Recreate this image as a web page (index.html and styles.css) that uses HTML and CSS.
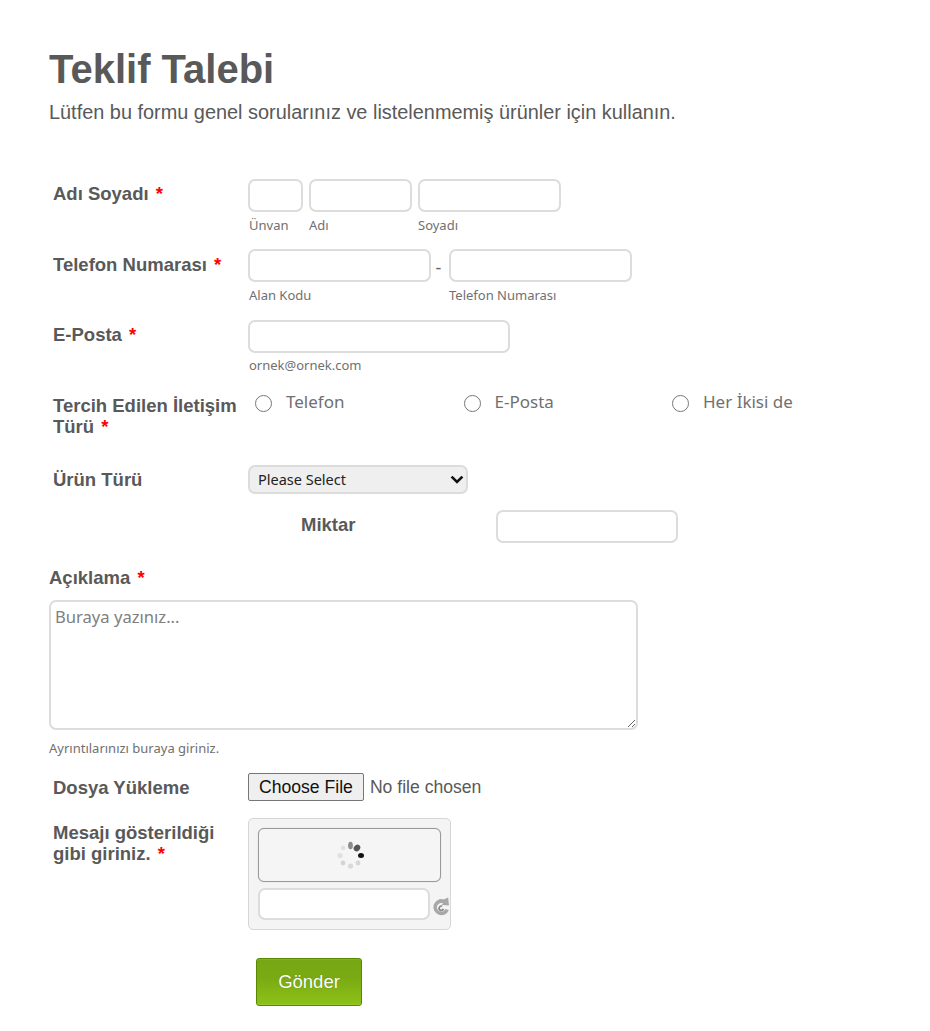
FILE: index.html
```html
<!DOCTYPE html>
<html lang="tr">
<head>
<meta charset="utf-8">
<title>Teklif Talebi</title>
<link rel="stylesheet" href="styles.css">
</head>
<body>
<form class="form">
  <header class="head">
    <h1 class="title">Teklif Talebi</h1>
    <p class="subtitle">Lütfen bu formu genel sorularınız ve listelenmemiş ürünler için kullanın.</p>
  </header>

  <div class="row row-name">
    <label class="label">Adı Soyadı <span class="req">*</span></label>
    <div class="fields">
      <div class="field"><input class="text w55" type="text"><span class="sub">Ünvan</span></div>
      <div class="field"><input class="text w103" type="text"><span class="sub">Adı</span></div>
      <div class="field"><input class="text w143" type="text"><span class="sub">Soyadı</span></div>
    </div>
  </div>

  <div class="row row-phone">
    <label class="label">Telefon Numarası <span class="req">*</span></label>
    <div class="fields fields-phone">
      <div class="field"><input class="text w183" type="text"><span class="sub">Alan Kodu</span></div>
      <span class="dash">-</span>
      <div class="field"><input class="text w183" type="text"><span class="sub">Telefon Numarası</span></div>
    </div>
  </div>

  <div class="row row-email">
    <label class="label">E-Posta <span class="req">*</span></label>
    <div class="field"><input class="text w262" type="text"><span class="sub">ornek@ornek.com</span></div>
  </div>

  <div class="row row-contact">
    <label class="label">Tercih Edilen İletişim Türü <span class="req">*</span></label>
    <div class="radios">
      <label class="radio"><input type="radio" name="c"><span class="radio-text">Telefon</span></label>
      <label class="radio"><input type="radio" name="c"><span class="radio-text">E-Posta</span></label>
      <label class="radio"><input type="radio" name="c"><span class="radio-text">Her İkisi de</span></label>
    </div>
  </div>

  <div class="row row-product">
    <label class="label">Ürün Türü</label>
    <div class="select-wrap">
      <select class="select"><option>Please Select</option></select>
      <svg class="chevron" width="14" height="9" viewBox="0 0 14 9" aria-hidden="true">
        <path d="M1.6 1.6 7 7 12.4 1.6" fill="none" stroke="#111" stroke-width="2.6"/>
      </svg>
    </div>
  </div>

  <div class="row-qty">
    <label class="label-qty">Miktar</label>
    <input class="text w182" type="text">
  </div>

  <div class="block-desc">
    <label class="label-desc">Açıklama <span class="req">*</span></label>
    <textarea class="area" placeholder="Buraya yazınız..."></textarea>
    <span class="sub sub-desc">Ayrıntılarınızı buraya giriniz.</span>
  </div>

  <div class="row row-file">
    <label class="label">Dosya Yükleme</label>
    <input class="file" type="file">
  </div>

  <div class="row row-captcha">
    <label class="label">Mesajı gösterildiği gibi giriniz. <span class="req">*</span></label>
    <div class="captcha">
      <div class="captcha-img">
        <svg class="spinner" width="28" height="30" viewBox="0 0 28 30" aria-hidden="true">
          <ellipse cx="13.5" cy="5.5" rx="2.4" ry="3.8" fill="#8c8c8c"/>
          <ellipse cx="20" cy="8" rx="3" ry="3.6" fill="#555" transform="rotate(40 20 8)"/>
          <ellipse cx="24" cy="15.5" rx="3" ry="2.5" fill="#111"/>
          <circle cx="21" cy="23" r="2.4" fill="#d6d6d6"/>
          <circle cx="13.5" cy="26" r="2.6" fill="#d9d9d9"/>
          <circle cx="6" cy="23" r="2.4" fill="#d4d4d4"/>
          <circle cx="3" cy="15.5" r="2.6" fill="#e0e0e0"/>
          <circle cx="6" cy="8" r="2.4" fill="#e2e2e2"/>
        </svg>
      </div>
      <div class="captcha-entry">
        <input class="text captcha-input" type="text">
        <svg class="refresh" width="17" height="20" viewBox="0 0 17 20" aria-hidden="true">
          <path d="M10.5 3.4A8 8 0 1 0 15.9 14l-3.6-.9a4.4 4.4 0 1 1-2.2-5.8L8.6 9l7.4.6L15.2 1.4z" fill="#a8a8a8"/>
          <path d="M9.6 9.6a3 3 0 1 0 1.6 3.4l-1.7-.4a1.3 1.3 0 1 1-.8-1.6z" fill="#8a8a8a"/>
        </svg>
      </div>
    </div>
  </div>

  <div class="actions"><button class="submit" type="button">Gönder</button></div>
</form>
</body>
</html>
```
FILE: styles.css
```css
* { box-sizing: border-box; }
html, body { margin: 0; background: #fff; }
body { font-family: "Liberation Sans", Arial, sans-serif; color: #555; }
.form { padding: 44px 0 0 49px; width: 930px; height: 1031px; overflow: hidden; }
.title { margin: 0; font-size: 40px; line-height: 50px; font-weight: 700; color: #595959; }
.subtitle { margin: 4px 0 0; font-size: 19.9px; line-height: 28px; color: #595959; }

.row { display: flex; align-items: flex-start; padding-left: 4px; }
.label { width: 195px; flex: none; font-size: 18.5px; line-height: 21px; font-weight: 700; color: #595959; }
.req { margin-left: 2px; color: #f00; }
.fields { display: flex; gap: 6px; }
.field { display: flex; flex-direction: column; }
.sub { font-family: "Noto Sans", sans-serif; font-size: 13px; line-height: 18px; color: #707070; margin-top: 4px; }
.fields .field:first-child .sub, .row-email .sub { padding-left: 1px; }
.row-email .sub { margin-top: 3px; }

.text { display: block; height: 33px; padding: 0 6px; background: #fff; border: 2px solid #dcdcdc; border-radius: 7px; outline: none; }
.w55 { width: 55px; }
.w103 { width: 103px; }
.w143 { width: 143px; }
.w183 { width: 183px; }
.w182 { width: 182px; }
.w262 { width: 262px; }

.row-name { margin-top: 53px; }
.row-name .label { padding-top: 4px; }
.row-phone { margin-top: 15px; }
.row-phone .label { padding-top: 5px; }
.fields-phone { gap: 0; }
.dash { width: 18px; padding-right: 3px; text-align: center; font-family: "Noto Sans", sans-serif; font-size: 18px; line-height: 36px; color: #666; }
.row-email { margin-top: 16px; }
.row-email .label { padding-top: 4px; }

.row-contact { margin-top: 15px; }
.row-contact .label { padding-top: 6px; padding-right: 8px; }
.radios { display: flex; }
.radio { display: flex; width: 208.5px; align-items: flex-start; font-family: "Noto Sans", sans-serif; font-size: 17px; line-height: 24px; color: #707070; }
.radio input { margin: 6px 14px 0 7px; width: 17px; height: 17px; flex: none; accent-color: #666; }
.radio-text { padding-top: 1px; }

.row-product { margin-top: 28px; }
.row-product .label { padding-top: 4px; }
.select-wrap { position: relative; width: 220px; height: 29px; }
.select { display: block; width: 100%; height: 100%; padding: 0 0 2px 8px; appearance: none; background: #efefef; border: 2px solid #dcdcdc; border-radius: 7px; font-family: "Noto Sans", sans-serif; font-size: 14.5px; color: #222; outline: none; }
.chevron { position: absolute; top: 10px; right: 4px; pointer-events: none; }

.row-qty { display: flex; align-items: center; margin-top: 16px; padding-left: 252px; }
.label-qty { width: 195px; padding-bottom: 4px; font-size: 18.5px; font-weight: 700; color: #595959; }

.block-desc { display: flex; flex-direction: column; align-items: flex-start; margin-top: 24px; }
.label-desc { font-size: 18.5px; line-height: 21px; font-weight: 700; color: #595959; }
.area { display: block; width: 589px; height: 130px; margin-top: 12px; padding: 3px 4px; border: 2px solid #dcdcdc; border-radius: 7px; font-family: "Noto Sans", sans-serif; font-size: 16.6px; line-height: 24px; color: #555; outline: none; resize: both; }
.area::placeholder { color: #808080; opacity: 1; }
.sub-desc { font-size: 13px; margin-top: 9px; }

.row-file { margin-top: 16px; align-items: center; }
.file { font-family: "Liberation Sans", Arial, sans-serif; font-size: 17.6px; color: #595959; width: 300px; }
.file::file-selector-button { font: inherit; color: #111; height: 28px; padding: 0 10px; margin-right: 6px; background: #efefef; border: 1px solid #767676; border-radius: 2px; }

.row-captcha { margin-top: 17px; }
.row-captcha .label { padding-top: 4px; padding-right: 10px; }
.captcha { width: 203px; height: 112px; padding: 9px 9px 0; background: #f4f4f4; border: 1px solid #d6d6d6; border-radius: 5px; }
.captcha-img { display: flex; align-items: center; justify-content: center; width: 183px; height: 54px; background: #f5f5f5; border: 1px solid #999; border-radius: 6px; box-shadow: 0 0 1px rgba(0, 0, 0, .25); }
.spinner { margin-left: 3px; }
.captcha-entry { display: flex; align-items: center; gap: 3px; margin-top: 6px; }
.captcha-input { width: 172px; height: 32px; }
.refresh { flex: none; margin-top: 3px; }

.actions { padding: 28px 0 0 207px; }
.submit { display: block; width: 106px; height: 48px; padding: 0; background: radial-gradient(rgba(255, 255, 255, .1) .6px, transparent 1px) 0 0 / 2px 2px, linear-gradient(#6b9f00 0%, #6fa300 40%, #84bd06 100%); border: 1px solid #578a00; border-radius: 3px; box-shadow: inset 0 1px 0 #7fb41c, inset 0 -1px 0 #93c92a; font-family: "Liberation Sans", Arial, sans-serif; font-size: 18.5px; color: #fff; text-shadow: 0 0 1px rgba(60, 90, 0, .6); }
```
